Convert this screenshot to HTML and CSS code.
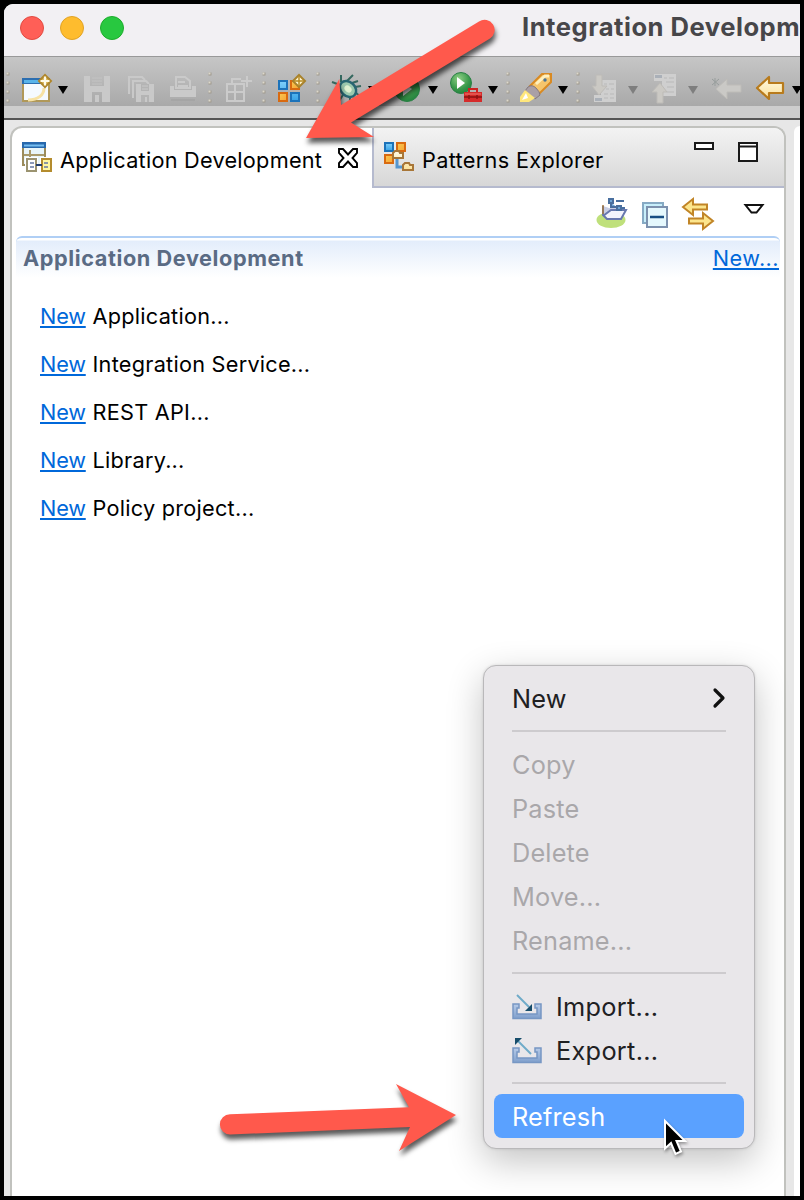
FILE: index.html
```html
<!DOCTYPE html>
<html lang="en">
<head>
<meta charset="utf-8">
<title>Integration Development</title>
<link rel="stylesheet" href="styles.css">
</head>
<body>
<svg width="0" height="0" class="defs">
  <defs>
    <linearGradient id="blue" x1="0" y1="0" x2="0" y2="1"><stop offset="0" stop-color="#7fd0fa"/><stop offset="1" stop-color="#36a2e6"/></linearGradient>
    <linearGradient id="orange" x1="0" y1="0" x2="1" y2="1"><stop offset="0" stop-color="#fbe36a"/><stop offset="1" stop-color="#f58a1c"/></linearGradient>
    <linearGradient id="cream" x1="0" y1="0" x2="0" y2="1"><stop offset="0" stop-color="#fffbe6"/><stop offset="1" stop-color="#fbe098"/></linearGradient>
    <radialGradient id="green" cx=".4" cy=".3" r=".8"><stop offset="0" stop-color="#8fcf86"/><stop offset=".6" stop-color="#3a9a4b"/><stop offset="1" stop-color="#1e7a3a"/></radialGradient>
    <linearGradient id="tray" x1="0" y1="0" x2="0" y2="1"><stop offset="0" stop-color="#b7cbe8"/><stop offset="1" stop-color="#7f9fcc"/></linearGradient>
    <g id="grip" fill="#a09a8e"><path d="M6.500 72.500h3v3h-3zM6.500 81.500h3v3h-3zM6.500 90.500h3v3h-3zM6.500 99.500h3v3h-3z"/><path d="M6.500 72.500h2v2h-2zM6.500 81.500h2v2h-2zM6.500 90.500h2v2h-2zM6.500 99.500h2v2h-2z" fill="#dcd8cc"/></g>
    <path id="drop" d="M58 86h10l-5 8z"/>
    <path id="spark" d="M0-6L3-3 6 0 3 3 0 6-3 3-6 0-3-3z"/>
    <path id="floppy" fill-rule="evenodd" d="M84 76h26v26H84zM90 76v10h14V76zM92 92v10h3v-7h4v7h3V92z"/>
  </defs>
</svg>
<main class="window">
  <header class="titlebar">
    <span class="light red"></span><span class="light amber"></span><span class="light lime"></span>
    <h1>Integration Developm</h1>
  </header>
  <nav class="toolbar">
    <svg width="8" viewBox="4 57 8 49"><use href="#grip"/></svg>
    <svg width="60" viewBox="12 57 60 49">
      <path d="M23 79h26v22H23z" fill="#f5faff" stroke="#b09858" stroke-width="2"/><path d="M22 78h28v6H22z" fill="#2c6eb0"/><path d="M24 80h22v3H24z" fill="#58b4ea"/>
      <path d="M28 100c10 0 16-5 16-12" fill="none" stroke="#f7e2a4" stroke-width="3"/>
      <use href="#spark" x="45" y="81" fill="#d9b75c" stroke="#b0862a" stroke-width="2"/><path d="M45 76.500v9M40.500 81h9" stroke="#fffbe8" stroke-width="2.200"/>
      <use href="#drop"/>
    </svg>
    <svg width="46" viewBox="72 57 46 49"><use href="#floppy" fill="#c9c9c9"/><path d="M92 78h10M92 81h10M92 84h10" stroke="#c3c3c3"/></svg>
    <svg width="44" viewBox="118 57 44 49" fill="none" stroke="#c9c9c9" stroke-width="2"><path d="M129 94V77h13l3 3M133 98V81h13l3 3"/><path d="M137 85h16v16h-16z" fill="#c9c9c9" stroke="none"/><path d="M136 84h18v18h-18z" fill="#c9c9c9" stroke="none"/><path d="M141 84h8v7h-8zM141 102v-7h8v7h-2v-5h-2v5z" fill="#b4b4b4" stroke="none"/><path d="M142 86h6M142 89h6" stroke-width="1"/></svg>
    <svg width="40" viewBox="162 57 40 49" fill="#cacaca"><path d="M170 86h4v4h18v-4h4v11h-26z"/><path d="M176 77h9l5 4v7h-14z" fill="none" stroke="#cacaca" stroke-width="2"/><path d="M178 82h7M178 86h10" stroke="#cacaca" stroke-width="2"/><path d="M171 100h24" stroke="#a5a5a5" stroke-width="2"/></svg>
    <svg width="16" viewBox="0 57 16 49"><use href="#grip"/></svg>
    <svg width="40" viewBox="218 57 40 49" fill="none" stroke="#cbcbcb" stroke-width="2"><path d="M227 84h17v17h-17zM235 84v17M227 92h17M232 83v-4h9M247 76v11M241 81h11"/></svg>
    <svg width="12" viewBox="2 57 12 49"><use href="#grip"/></svg>
    <svg width="42" viewBox="270 57 42 49">
      <g stroke-width="2"><path d="M279 81h8v8h-8zM291 93h8v8h-8z" fill="url(#blue)" stroke="#1c73ba"/><path d="M279 93h8v8h-8zM291 81h8v8h-8z" fill="url(#orange)" stroke="#d96a10"/></g>
      <use href="#spark" x="299" y="81" fill="#fff6cf" stroke="#a8822c" stroke-width="2"/><path d="M299 76v10M294 81h10" stroke="#b78b25" stroke-width="1.500"/>
    </svg>
    <svg width="12" viewBox="2 57 12 49"><use href="#grip"/></svg>
    <svg width="60" viewBox="324 57 60 49">
      <path d="M340 85l-8-3M341 90l-7 1M343 95l-4 6M350 97v7M347 81l6-6M352 83l6-2M355 87l6-1M356 93l5 4M341 82v-7M354 97l3 5" fill="none" stroke="#35685f" stroke-width="2"/>
      <ellipse cx="348" cy="89" rx="9" ry="7" transform="rotate(42 348 89)" fill="#9cc9ae" stroke="#286572" stroke-width="2.500"/><ellipse cx="348" cy="89" rx="4" ry="3" transform="rotate(42 348 89)" fill="#dff0d0"/>
      <use href="#drop" x="310"/>
    </svg>
    <svg width="58" viewBox="384 57 58 49"><circle cx="407" cy="89" r="12.500" fill="url(#green)" stroke="#2a8146"/><path d="M403 82v14l9-7z" fill="#fff"/><use href="#drop" x="370"/></svg>
    <svg width="60" viewBox="442 57 60 49">
      <circle cx="461" cy="83" r="10.500" fill="url(#green)" stroke="#2a8146"/><path d="M457 77v12l8-6z" fill="#fff"/>
      <path d="M469 93v-4h8v4" fill="none" stroke="#cc2222" stroke-width="2"/><path d="M464 92h18v10h-18z" fill="#d52b2b"/><path d="M464 97h18M469 95v4M477 95v4" stroke="#8c1111" stroke-width="1.500"/><path d="M465 94h16" stroke="#f07a70"/>
      <use href="#drop" x="430"/>
    </svg>
    <svg width="12" viewBox="2 57 12 49"><use href="#grip"/></svg>
    <svg width="58" viewBox="514 57 58 49">
      <path d="M530 86l12-12h9v8l-12 12z" fill="#f5c56c" stroke="#d98a22" stroke-width="2"/><path d="M536 84l9-8h4" fill="none" stroke="#fff0bd" stroke-width="3"/><circle cx="545" cy="80" r="1.700" fill="#4a7396"/>
      <path d="M528 87q4-3 8 1t4 7l-5 4-10-8z" fill="#aaa0a6" stroke="#84777c"/><path d="M525 90l-5 7v5h9l6-4z" fill="#ffe77c"/><path d="M526 93l-4 7 6-2z" fill="#fff"/>
      <use href="#drop" x="500"/>
    </svg>
    <svg width="12" viewBox="2 57 12 49"><use href="#grip"/></svg>
    <svg width="58" viewBox="584 57 58 49"><path d="M601 80h15v22h-22v-7h7z" fill="#cfcfcf"/><path d="M604 84h3M609 84h5M606 89h3M611 89h3M604 94h4M610 94h4M604 98h4M610 98h4" stroke="#b9b9b9"/><path d="M596 75h6v11h5l-8 9-7-9h4z" fill="#cbc9c4" stroke="#bdbbb7"/><path d="M595 98h7v3h-7z" fill="#aab0b8"/><use href="#drop" x="570" fill="#7e7e7e"/></svg>
    <svg width="60" viewBox="642 57 60 49"><path d="M654 74h22v22h-14V81h-8z" fill="#cfcfcf"/><path d="M664 78h3M669 78h5M666 82h8M667 87h7M667 92h7" stroke="#b9b9b9"/><path d="M657 103V92h-5l8-9 7 9h-4v11z" fill="#cbc9c4" stroke="#bdbbb7"/><path d="M655 75h7v3h-7z" fill="#aab0b8"/><use href="#drop" x="630" fill="#7e7e7e"/></svg>
    <svg width="46" viewBox="702 57 46 49"><path d="M716 89l11-10v6h14v7h-14v7z" fill="#cac9c6" stroke="#bebcb8"/><path d="M712 79l7 6M719 79l-7 6M715 78v8" stroke="#979d9c"/></svg>
    <svg width="52" viewBox="748 57 52 49"><path d="M757 88l12-11v6h14v10h-14v6z" fill="url(#cream)" stroke="#b87b1c" stroke-width="2.200" stroke-linejoin="round"/><use href="#drop" x="734"/></svg>
  </nav>
  <div class="toolbar-foot"></div>
  <div class="workbench">
    <section class="panel">
      <div class="tabs">
        <div class="tab active">
          <svg width="32" height="32" viewBox="21 141 32 32">
            <path d="M23 145h22v20H23z" fill="#e8f5f9" stroke="#9c8c5b" stroke-width="2"/><path d="M30 150v10M24 155h20" stroke="#a99a6a" stroke-width="2"/><path d="M22 142h24v6H22z" fill="#2868ac"/><path d="M24 144.500h20v2H24z" fill="#75bdf0"/>
            <path d="M25 157h13v16H25zM40 157h13v16H40z" fill="#fff"/><path d="M27 159h9v12h-9z" fill="#fff" stroke="#9b9370" stroke-width="2"/><path d="M42 159h9v12h-9z" fill="#fff6a0" stroke="#b48c2e" stroke-width="2"/><path d="M30 163h4M30 167h4M44 163h4M44 167h4" stroke="#6678a2" stroke-width="1.500"/><path d="M36 165h6" stroke="#243e70" stroke-width="2"/>
          </svg>
          <span class="tab-a">Application Development</span>
          <svg class="close" width="22" height="22" viewBox="337 147 22 22"><path d="M339 149h4l5 5.500 5-5.500h4v4l-4.500 5 4.500 5v4h-4l-5-5.500-5 5.500h-4v-4l4.500-5-4.500-5z" fill="#fff" stroke="#000" stroke-width="1.900"/></svg>
        </div>
        <div class="tab idle">
          <svg width="32" height="32" viewBox="383 141 32 32">
            <path d="M397 158v9h8" fill="none" stroke="#5596cf" stroke-width="3"/>
            <g stroke-width="2"><path d="M385 143h8v8h-8z" fill="url(#blue)" stroke="#1c73ba"/><path d="M397 143h8v8h-8zM385 155h8v8h-8z" fill="url(#orange)" stroke="#d96a10"/></g>
            <g fill="url(#cream)" stroke="#a87638" stroke-width="2"><path d="M393 158v-5l2-2h4l1 2h3v5zM403 170v-5l2-2h4l1 2h3v5z"/></g>
          </svg>
          <span class="tab-b">Patterns Explorer</span>
          <svg class="winbtns" width="66" height="24" viewBox="693 140 66 24" fill="#fff" stroke="#1a1a1a" stroke-width="2"><path d="M695 143h18v6h-18zM739 143h18v18h-18z"/><path d="M739 146.500h18"/></svg>
        </div>
      </div>
      <div class="viewbar">
        <svg width="180" height="40" viewBox="590 192 180 40">
          <ellipse cx="611" cy="220" rx="14.500" ry="8" fill="#bfe07b"/><path d="M603 206v9l3 4h14l5-7-4-4h-12z" fill="#c8cee5"/><path d="M603 206v9l4 4h14l5-9h-15l-8 6" fill="#f3f4fc" stroke="#6878ae" stroke-width="2"/><path d="M603 205v9" stroke="#a57840" stroke-width="1.500"/><path d="M609 199h4v4h-4zM617 206h4v4h-4zM611 203v4h6M616 201h8M621 208h4" fill="#6fa5d7" stroke="#496f9f" stroke-width="2"/>
          <path d="M643 203h20v20h-20z" fill="#c8effb" stroke="#86aac4" stroke-width="2"/><path d="M647 207h20v20h-20z" fill="#e5f8fd" stroke="#7c91ae" stroke-width="2"/><path d="M650 217h14" stroke="#174e83" stroke-width="2.500"/>
          <g fill="#fce58c" stroke="#c18527" stroke-width="2"><path d="M683 207l10-8v5.500h14v5h-14v5.500zM713 221l-10-8v5.500h-14v5h14v5.500z"/></g>
          <path d="M745.500 205h17l-6 7.500h-5z" fill="#fff" stroke="#111" stroke-width="2"/>
        </svg>
      </div>
      <div class="formhead"><h2>Application Development</h2><a>New...</a></div>
      <ul class="links">
        <li><a>New</a><span>Application...</span></li>
        <li><a>New</a><span>Integration Service...</span></li>
        <li><a>New</a><span>REST API...</span></li>
        <li><a>New</a><span>Library...</span></li>
        <li><a>New</a><span>Policy project...</span></li>
      </ul>
    </section>
    <aside class="editor"></aside>
  </div>
</main>

<div class="menu">
  <div class="item"><span>New</span><svg width="16" height="22" viewBox="0 0 16 22"><path d="M5 3l8 8-8 8" fill="none" stroke="#111" stroke-width="3.200" stroke-linecap="round" stroke-linejoin="round"/></svg></div>
  <hr>
  <div class="item off">Copy</div>
  <div class="item off">Paste</div>
  <div class="item off">Delete</div>
  <div class="item off">Move...</div>
  <div class="item off">Rename...</div>
  <hr>
  <div class="item icon"><svg width="30" height="28" viewBox="512 993 30 28"><path d="M513 1005h6v4h-2v6h20v-6h-2v-4h6v14.500h-28z" fill="url(#tray)" stroke="#7797c4" stroke-width="1.500"/><path d="M517 996l12 12" stroke="#6fabc9" stroke-width="2"/><path d="M532 1005v7h-7z" fill="#174d6b"/></svg><span>Import...</span></div>
  <div class="item icon"><svg width="30" height="28" viewBox="512 1037 30 28"><path d="M513 1049h6v4h-2v6h20v-6h-2v-4h6v14.500h-28z" fill="url(#tray)" stroke="#7797c4" stroke-width="1.500"/><path d="M518 1042l13 13" stroke="#6fabc9" stroke-width="2"/><path d="M515 1039h7l-7 7z" fill="#174d6b"/></svg><span>Export...</span></div>
  <hr>
  <div class="item hot">Refresh</div>
</div>

<svg class="marks" width="804" height="1200" viewBox="0 0 804 1200">
  <g class="arrow">
    <path d="M306 138L339.300 79 341 105 479 21.400A10 10 0 0 1 490 38.500L351 122.500 374 137z"/>
    <path d="M230 1114.300L409 1107.300 396 1084 456 1115 399 1151 410 1127 230 1134.500A10 10 0 0 1 230 1114.300z"/>
  </g>
  <path class="pointer" d="M665 1121v27.500l6-5.500 4.500 11 5.500-2.500-4.500-10.500h8.500z"/>
</svg>
</body>
</html>
```

FILE: styles.css
```css
* { box-sizing: border-box; }
body {
  margin: 0;
  width: 804px;
  height: 1200px;
  overflow: hidden;
  background: #000;
  font-family: Inter, "Liberation Sans", sans-serif;
  font-size: 21.700px;
  letter-spacing: .25px;
  color: #000;
}
.defs { position: absolute; }
.window {
  margin: 4px;
  width: 796px;
  height: 1192px;
  display: flex;
  flex-direction: column;
  overflow: hidden;
  border-top-left-radius: 9px;
  background: #e7e7e7;
}
.titlebar {
  flex: none;
  height: 52px;
  display: flex;
  align-items: center;
  gap: 16px;
  padding: 0 0 4px 16px;
  background: #f2f0f3;
}
.light { flex: none; width: 24px; height: 24px; border-radius: 50%; border: 1px solid; }
.red { background: #ff5f57; border-color: #e24b41; }
.amber { background: #febc2e; border-color: #e1a325; }
.lime { background: #28c840; border-color: #1dad2b; }
.titlebar h1 {
  margin: -2px 0 0 382px;
  font-size: 25.600px;
  font-weight: 700;
  letter-spacing: .5px;
  line-height: 40px;
  white-space: nowrap;
  color: #474649;
}
.toolbar {
  flex: none;
  height: 50px;
  display: flex;
  border-top: 1px solid #999;
  background: linear-gradient(#c6c6c6, #a9a9a9);
}
.toolbar svg { flex: none; height: 49px; display: block; }
.toolbar-foot { flex: none; height: 14px; background: #cdcdcd; border-bottom: 2px solid #555; }
.workbench { flex: 1; display: flex; gap: 8px; padding: 6px 0 0 6px; }
.panel {
  flex: none;
  width: 776px;
  border: 2px solid #c1c2be;
  border-bottom: 0;
  border-radius: 12px 12px 0 0;
  background: #fff;
  overflow: hidden;
}
.editor { flex: 1; background: #fff; border-top-left-radius: 10px; }
.tabs { height: 60px; display: flex; }
.tab { display: flex; align-items: center; white-space: nowrap; }
.active { width: 360px; padding: 0 0 0 9px; }
.active > svg:first-child { margin-bottom: 2px; }
.tab-a { margin: 3px 0 0 7px; width: 262px; }
.close { margin: 0 0 0 15px; }
.idle {
  flex: 1;
  padding-left: 9px;
  border-left: 2px solid #b5bace;
  border-bottom: 2px solid #b5bace;
  background: linear-gradient(#f3f3f3, #d7d7d7);
}
.tab-b { margin: 5px 0 0 7px; letter-spacing: .33px; }
.winbtns { margin: 0 25px 10px auto; }
.viewbar { height: 48px; display: flex; justify-content: flex-end; align-items: center; padding-right: 14px; }
.formhead {
  height: 42px;
  margin: 0 4px;
  padding: 0 1px 0 8px;
  display: flex;
  justify-content: space-between;
  align-items: center;
  border-top: 2px solid #b0cff5;
  border-radius: 6px 6px 0 0;
  background: linear-gradient(#fff 2px, #e3edfb 3px, #fff);
}
.formhead h2 { margin: 0 0 0 -1px; font-size: 21.700px; font-weight: 700; letter-spacing: .58px; color: #5a6b84; }
.formhead a { letter-spacing: .45px; }
a { color: #0068da; text-decoration: underline; text-decoration-thickness: 2px; text-underline-offset: 2px; text-decoration-skip-ink: none; }
.links { list-style: none; margin: 0; padding: 14px 0 0 28px; }
.links li { height: 48px; display: flex; align-items: center; gap: 8px; }
.links a { width: 44.500px; letter-spacing: -.2px; }

.menu {
  position: absolute;
  left: 483px;
  top: 665px;
  width: 272px;
  height: 484px;
  padding: 10px;
  border: 1px solid #b9b8ba;
  border-radius: 13px;
  background: #e9e7ea;
  box-shadow: 0 12px 36px rgba(0, 0, 0, .24), 0 0 3px rgba(0, 0, 0, .12);
  font-size: 25.300px;
  letter-spacing: .18px;
  color: #202022;
}
.item { height: 44px; padding: 0 18px; display: flex; align-items: center; }
.item > svg { margin-left: auto; }
.item.off { color: #a9a7aa; }
.item.icon { gap: 14px; letter-spacing: .3px; }
.item.icon > svg { margin: 0; }
.item.hot { border-radius: 8px; background: #5aa1ff; color: #fff; }
.menu hr { height: 2px; margin: 10px 18px; border: 0; background: #cdcbce; }

.marks { position: absolute; left: 0; top: 0; pointer-events: none; }
.arrow { fill: #ff594c; filter: drop-shadow(1px 5px 2.500px rgba(0, 0, 0, .65)); }
.pointer { fill: #000; stroke: #fff; stroke-width: 2; filter: drop-shadow(1px 2px 1.500px rgba(0, 0, 0, .35)); }
```
